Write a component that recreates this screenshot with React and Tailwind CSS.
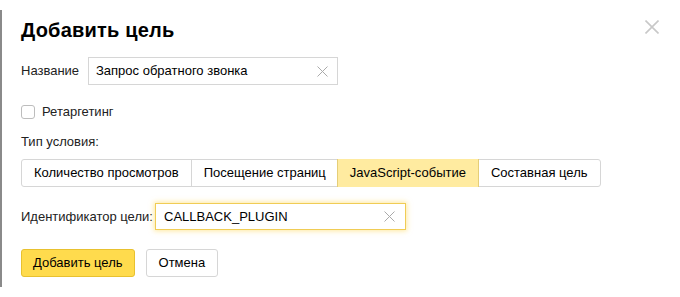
import React, { useState } from "react";

const tabs = ["Количество просмотров", "Посещение страниц", "JavaScript-событие", "Составная цель"];

function ClearIcon({ className }) {
  return (
    <svg width="11" height="11" viewBox="0 0 11 11" className={className}>
      <path d="M0.5 0.5L10.5 10.5M10.5 0.5L0.5 10.5" stroke="currentColor" strokeWidth="1" fill="none" />
    </svg>
  );
}

export default function App() {
  const [active, setActive] = useState(2);
  const [name, setName] = useState("Запрос обратного звонка");
  const [goalId, setGoalId] = useState("CALLBACK_PLUGIN");

  return (
    <div className="w-[680px] h-[297px] bg-white flex overflow-hidden font-['Liberation_Sans',Arial,sans-serif] text-[13px] text-[#000]">
      {/* edge of the page behind the dialog */}
      <div className="w-[2px] my-[10px] bg-[#8a8a8a]" />

      <div className="flex-1 flex flex-col pl-[19px] pr-[21px] pt-[16px]">
        <div className="flex items-start justify-between">
          <h2 className="text-[20px] leading-[28px] font-bold text-[#000] tracking-[0.2px]">Добавить цель</h2>
          <button className="mt-[4px] text-[#c8c8c8]">
            <svg width="14" height="14" viewBox="0 0 14 14">
              <path d="M0.5 0.5L13.5 13.5M13.5 0.5L0.5 13.5" stroke="currentColor" strokeWidth="1.6" fill="none" />
            </svg>
          </button>
        </div>

        <div className="flex items-center mt-[13px]">
          <label className="text-[#222] w-[67px]">Название</label>
          <div className="flex items-center w-[250px] h-[28px] border border-[#d6d6d6] px-[7px]">
            <input
              value={name}
              onChange={(e) => setName(e.target.value)}
              className="flex-1 outline-none bg-transparent text-[13px] text-[#000]"
            />
            <ClearIcon className="text-[#aaa] mr-[2px]" />
          </div>
        </div>

        <label className="flex items-center mt-[17px] text-[#222]">
          <span className="w-[14px] h-[14px] border border-[#bdbdbd] rounded-[3px] mr-[7px]" />
          Ретаргетинг
        </label>

        <div className="mt-[10px] text-[#222]">Тип условия:</div>

        <div className="flex mt-[8px] w-fit border border-[#d6d6d6] rounded-[3px] h-[28px]">
          {tabs.map((t, idx) => (
            <button
              key={idx}
              onClick={() => setActive(idx)}
              className={
                idx === active
                  ? "px-[12px] bg-[#ffeba0] border-x border-[#e5ce78] text-[#000] -my-px h-[28px] -mx-px z-10"
                  : "px-[12px] text-[#000] border-l border-[#d6d6d6] first:border-l-0"
              }
            >
              {t}
            </button>
          ))}
        </div>

        <div className="flex items-center mt-[16px]">
          <label className="text-[#222] w-[134px]">Идентификатор цели:</label>
          <div className="flex items-center w-[251px] h-[27px] border border-[#f0cc55] shadow-[0_0_5px_1px_rgba(255,214,77,0.55)] px-[8px]">
            <input
              value={goalId}
              onChange={(e) => setGoalId(e.target.value)}
              className="flex-1 outline-none bg-transparent text-[13px] text-[#000]"
            />
            <ClearIcon className="text-[#aaa] mr-[2px]" />
          </div>
        </div>

        <div className="flex gap-[11px] mt-[19px]">
          <button className="h-[28px] px-[11px] bg-[#ffdb4d] border border-[#e8c12f] rounded-[3px] text-[#000]">
            Добавить цель
          </button>
          <button className="h-[28px] px-[12px] bg-white border border-[#d6d6d6] rounded-[3px] text-[#000]">
            Отмена
          </button>
        </div>
      </div>
    </div>
  );
}
